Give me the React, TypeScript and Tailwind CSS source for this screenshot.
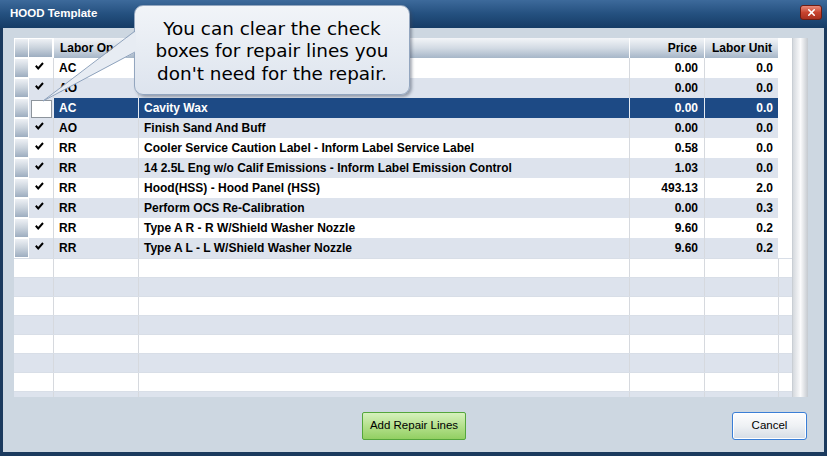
import { X } from "lucide-react";

type Line = { op: string; desc: string; price: string; unit: string; checked: boolean };

const lines: Line[] = [
  { op: "AC", desc: "Corrosion Protection", price: "0.00", unit: "0.0", checked: true },
  { op: "AO", desc: "Corrosion Protection Prep", price: "0.00", unit: "0.0", checked: true },
  { op: "AC", desc: "Cavity Wax", price: "0.00", unit: "0.0", checked: false },
  { op: "AO", desc: "Finish Sand And Buff", price: "0.00", unit: "0.0", checked: true },
  { op: "RR", desc: "Cooler Service Caution Label - Inform Label Service Label", price: "0.58", unit: "0.0", checked: true },
  { op: "RR", desc: "14 2.5L Eng w/o Calif Emissions - Inform Label Emission Control", price: "1.03", unit: "0.0", checked: true },
  { op: "RR", desc: "Hood(HSS) - Hood Panel (HSS)", price: "493.13", unit: "2.0", checked: true },
  { op: "RR", desc: "Perform OCS Re-Calibration", price: "0.00", unit: "0.3", checked: true },
  { op: "RR", desc: "Type A R - R W/Shield Washer Nozzle", price: "9.60", unit: "0.2", checked: true },
  { op: "RR", desc: "Type A L - L W/Shield Washer Nozzle", price: "9.60", unit: "0.2", checked: true },
];

const SELECTED = 2;

function Check() {
  return (
    <svg width="9" height="8" viewBox="0 0 9 8" className="block">
      <path d="M0.8 3.8 L3.2 6.4 L8 1" fill="none" stroke="#000" strokeWidth="2" />
    </svg>
  );
}

function RowHead() {
  return (
    <div className="w-[15px] h-full shrink-0 border border-white bg-gradient-to-b from-[#eef1f5] via-[#c9d2dc] to-[#9dadc0]" />
  );
}

function DataRow({ line, index }: { line: Line; index: number }) {
  const selected = index === SELECTED;
  const stripe = index % 2 === 1 ? "bg-[#dde3ed]" : "bg-white";
  const rowBg = selected ? "bg-[#1d4a85] text-white" : `${stripe} text-black`;
  const line_ = selected ? "border-[#e6ebf2]" : "border-[#d6d9de]";
  return (
    <div className="flex h-[20px] shrink-0 w-[778px] bg-white">
      <RowHead />
      <div className={`w-[24px] h-full ${selected ? "bg-[#dde3ed]" : stripe} flex justify-center`}>
        {selected ? (
          <div className="mt-[2px] ml-[1px] w-[21px] h-[18px] bg-white border border-[#8d949c]" />
        ) : (
          <div className="pt-[4px] pr-[3px]">{line.checked && <Check />}</div>
        )}
      </div>
      <div className={`w-[85px] h-full pl-[5px] flex items-center border-l ${line_} ${rowBg}`}>{line.op}</div>
      <div className={`w-[491px] h-full pl-[5px] flex items-center border-l ${line_} ${rowBg} whitespace-nowrap overflow-hidden`}>
        {line.desc}
      </div>
      <div className={`w-[75px] h-full pr-[6px] flex items-center justify-end border-l ${line_} ${rowBg}`}>{line.price}</div>
      <div className={`w-[74px] h-full pr-[5px] flex items-center justify-end border-l ${line_} ${rowBg}`}>{line.unit}</div>
    </div>
  );
}

function EmptyRow({ index }: { index: number }) {
  const stripe = index % 2 === 1 ? "bg-[#dde3ed]" : "bg-white";
  return (
    <div className={`flex h-[19px] shrink-0 w-[778px] ${stripe} border-t border-[#d8dee7]`}>
      <div className="w-[39px] h-full" />
      <div className="w-[85px] h-full border-l border-[#d6d9de]" />
      <div className="w-[491px] h-full border-l border-[#d6d9de]" />
      <div className="w-[75px] h-full border-l border-[#d6d9de]" />
      <div className="w-[74px] h-full border-l border-[#d6d9de]" />
      <div className="w-[14px] h-full border-l border-[#d6d9de]" />
    </div>
  );
}

export default function App() {
  const headCell = "h-full bg-gradient-to-b from-[#f3f5f8] via-[#d3dbe4] to-[#a6b6c8] border-l border-white flex items-center";
  return (
    <div className="relative w-[827px] h-[456px] bg-[#1b3a5e] flex flex-col overflow-hidden font-['Liberation_Sans',Arial,sans-serif]">
      {/* title bar */}
      <div className="h-[28px] shrink-0 flex items-center justify-between pl-[10px] pr-[5px] bg-gradient-to-b from-[#3d6a9b] via-[#24507f] to-[#163c66]">
        <span className="text-white font-bold text-[11.5px] pb-[1px]">HOOD Template</span>
        <div className="mb-[3px] w-[22px] h-[15px] rounded-[3px] border border-[#6e1d14] bg-gradient-to-b from-[#e88a7a] via-[#c8442f] to-[#a8301f] flex items-center justify-center">
          <X className="w-[11px] h-[11px] text-white" strokeWidth={3.5} />
        </div>
      </div>

      {/* client */}
      <div className="flex-1 mx-[3px] mb-[4px] bg-[#cdd7e1] flex flex-col pl-[11px] pr-[16px] pt-[10px]">
        <div className="flex h-[359px] shrink-0 bg-white">
          <div className="w-[778px] flex flex-col overflow-hidden text-[12px] font-bold">
            <div className="flex h-[20px] shrink-0 w-[778px]">
              <div className="w-[15px] h-full border border-white bg-gradient-to-b from-[#eef1f5] via-[#c9d2dc] to-[#9dadc0]" />
              <div className="w-[24px] h-full border border-white border-l-0 bg-gradient-to-b from-[#eef1f5] via-[#c9d2dc] to-[#9dadc0]" />
              <div className={`w-[85px] pl-[6px] ${headCell}`}>Labor Op</div>
              <div className={`w-[491px] ${headCell}`} />
              <div className={`w-[75px] pr-[7px] justify-end ${headCell}`}>Price</div>
              <div className={`w-[74px] pr-[6px] justify-end ${headCell}`}>Labor Unit</div>
            </div>
            {lines.map((l, i) => (
              <DataRow key={i} line={l} index={i} />
            ))}
            {Array.from({ length: 8 }).map((_, i) => (
              <EmptyRow key={i} index={i} />
            ))}
          </div>
          <div className="w-[16px] h-full bg-gradient-to-r from-[#d5d9de] via-[#fbfbfc] to-[#c4c9cf] border-l border-[#c9ced4]" />
        </div>

        <div className="flex items-start mt-[15px] text-[11.5px] text-black">
          <button className="ml-[348px] w-[104px] h-[28px] border border-[#54a63c] bg-gradient-to-b from-[#d6f1bd] via-[#b4e08c] to-[#92cf62] rounded-[2px]">
            Add Repair Lines
          </button>
          <button className="ml-auto mr-[1px] w-[75px] h-[28px] border border-[#3a7ed6] rounded-[3px] bg-gradient-to-b from-[#fdfdfe] via-[#eef1f4] to-[#d5dce5] shadow-[inset_0_0_0_1px_#ffffff]">
            Cancel
          </button>
        </div>
      </div>

      {/* callout */}
      <div className="absolute left-[134px] top-[5px] w-[276px] h-[90px] pt-[3px] rounded-[9px] border border-[#93a6bf] bg-gradient-to-b from-[#f1f4f8] to-[#dde4ee] shadow-[2px_2px_3px_rgba(60,70,90,0.45)] flex flex-col items-center justify-center text-black text-[18.4px] leading-[22.5px] font-['DejaVu_Sans',sans-serif]">
        <span>You can clear the check</span>
        <span>boxes for repair lines you</span>
        <span>don't need for the repair.</span>
      </div>
      <svg className="absolute left-0 top-0" width="140" height="120" viewBox="0 0 140 120">
        <polygon points="136,31 43,101 136,52" fill="#e7ecf3" />
        <line x1="135" y1="31" x2="43" y2="101" stroke="#8fa3bd" strokeWidth="1" />
        <line x1="135" y1="52" x2="43" y2="101" stroke="#8fa3bd" strokeWidth="1" />
      </svg>
    </div>
  );
}
